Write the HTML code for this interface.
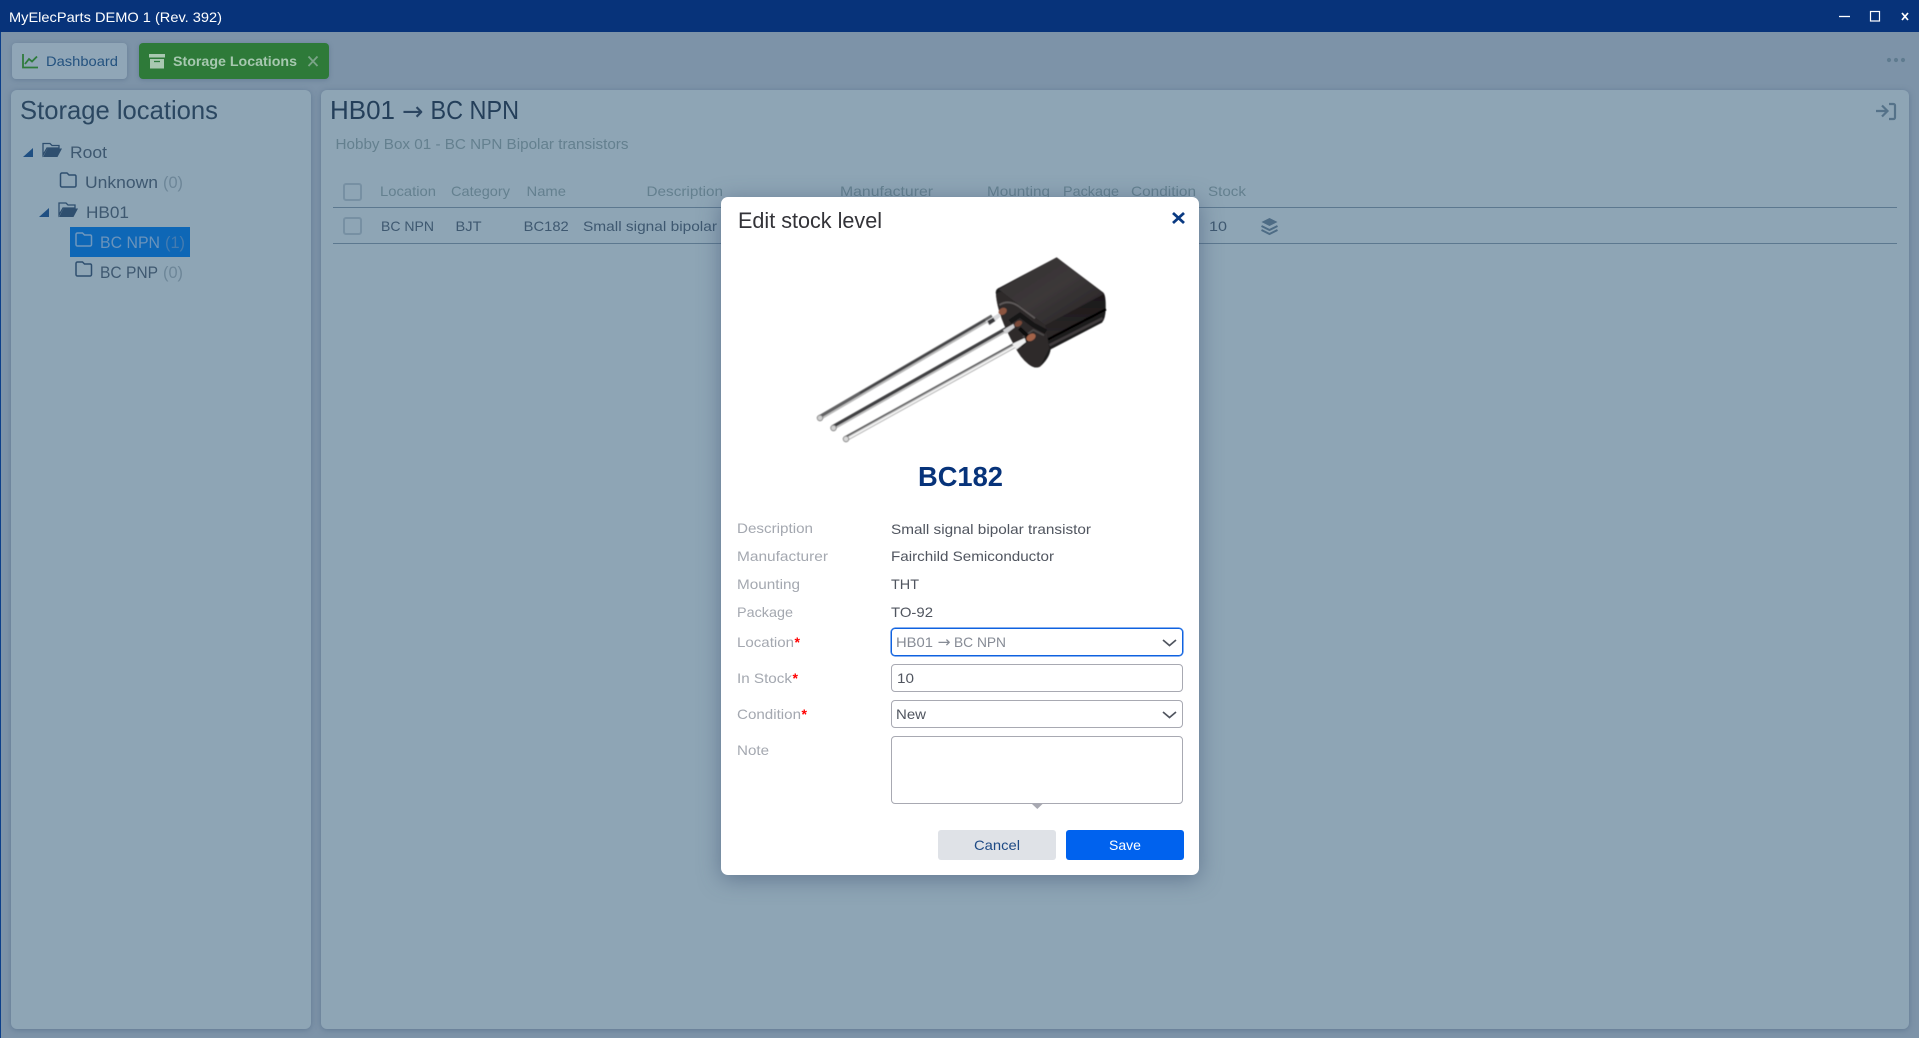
<!DOCTYPE html>
<html lang="en"><head><meta charset="utf-8"><title>MyElecParts DEMO 1 (Rev. 392)</title>
<style>
html,body{margin:0;padding:0;width:1919px;height:1038px;overflow:hidden;background:#7d93a8;font-family:"Liberation Sans",sans-serif}
.b{position:absolute;box-sizing:border-box}
svg{position:absolute;left:0;top:0}
text{font-family:"Liberation Sans",sans-serif}
.arr{font-family:"DejaVu Sans",sans-serif}
</style></head><body>
<div class="b" style="left:0;top:0;width:1px;height:1038px;background:#0c3f8a;z-index:2"></div>
<div class="b" style="left:0;top:0;width:1919px;height:32px;background:#07337a;z-index:2"></div>
<div class="b" style="left:12px;top:43px;width:115px;height:36px;background:#90a6b7;border-radius:4px;box-shadow:0 1px 5px rgba(70,95,125,.4)"></div>
<div class="b" style="left:139px;top:43px;width:190px;height:36px;background:#2e7a39;border-radius:4px;box-shadow:0 1px 5px rgba(70,95,125,.4)"></div>
<div class="b" style="left:11px;top:90px;width:300px;height:939px;background:#8ea5b5;border-radius:6px;box-shadow:0 1px 6px rgba(70,95,125,.5)"></div>
<div class="b" style="left:321px;top:90px;width:1588px;height:939px;background:#8ea5b5;border-radius:6px;box-shadow:0 1px 6px rgba(70,95,125,.5)"></div>
<div class="b" style="left:70px;top:227px;width:120px;height:30px;background:#0e67b6"></div>
<div class="b" style="left:343px;top:183px;width:19px;height:18px;border:2px solid #7790a3;border-radius:3px"></div>
<div class="b" style="left:343px;top:217px;width:19px;height:18px;border:2px solid #7790a3;border-radius:3px"></div>
<div class="b" style="left:333px;top:207px;width:1564px;height:1px;background:#5c788f"></div>
<div class="b" style="left:333px;top:243px;width:1564px;height:1px;background:#5c788f"></div>

<svg width="1919" height="1038" viewBox="0 0 1919 1038" style="z-index:3">
<text x="9" y="22" font-size="14" fill="#fff" textLength="213" lengthAdjust="spacingAndGlyphs">MyElecParts DEMO 1 (Rev. 392)</text>
<path d="M1839 16.500h11" stroke="#fff" stroke-width="1.300"/>
<rect x="1870.500" y="11.500" width="9" height="9.500" fill="none" stroke="#fff" stroke-width="1.200"/>
<path d="M1902 13l6 7M1908 13l-6 7" stroke="#fff" stroke-width="1.700"/>

<path d="M23 54v13.500h15M25 64l4-5 3 2.500 5-5" fill="none" stroke="#2e7b3c" stroke-width="1.800"/>
<text x="46" y="66" font-size="14" fill="#24527f" textLength="72" lengthAdjust="spacingAndGlyphs">Dashboard</text>
<path d="M149 54h16v3.500h-16zM150 59h14v9.500h-14z" fill="#a9c8b1"/><path d="M154 61.500h6" stroke="#2e7b3c" stroke-width="1.300"/>
<text x="173" y="66" font-size="14" font-weight="700" fill="#a7c8b0" textLength="124" lengthAdjust="spacingAndGlyphs">Storage Locations</text>
<path d="M308.500 56.500l9 9.500M317.500 56.500l-9 9.500" stroke="#7aa487" stroke-width="1.800"/>
<circle cx="1889" cy="60" r="2.100" fill="#5f7b8f"/><circle cx="1896" cy="60" r="2.100" fill="#5f7b8f"/><circle cx="1903" cy="60" r="2.100" fill="#5f7b8f"/>

<text x="20" y="119" font-size="26" fill="#2b4761" textLength="198" lengthAdjust="spacingAndGlyphs">Storage locations</text>
<path d="M33 148v9H23z" fill="#1f4f82"/>
<path d="M43 155V143.500h7l2 2h7v2.500h-12z" fill="none" stroke="#2f4f6f" stroke-width="1.300"/><path d="M43 157l4.500-8.500H62L57.500 157z" fill="#2f4f6f"/>
<text x="70" y="158" font-size="17" fill="#3e5870" textLength="37" lengthAdjust="spacingAndGlyphs">Root</text>
<path d="M60.500 174.500a1.500 1.500 0 0 1 1.500-1.500h5l2 2h6a1.500 1.500 0 0 1 1 1.500v9a1.500 1.500 0 0 1-1.500 1.500H62a1.500 1.500 0 0 1-1.500-1.500z" fill="none" stroke="#2f4f6f" stroke-width="1.500"/>
<text x="85" y="188" font-size="17" fill="#3e5870" textLength="73" lengthAdjust="spacingAndGlyphs">Unknown</text>
<text x="163" y="188" font-size="17" fill="#6d8698" textLength="20" lengthAdjust="spacingAndGlyphs">(0)</text>
<path d="M49 208v9H39z" fill="#1f4f82"/>
<path d="M59 215V203h7l2 2h7v3h-12z" fill="none" stroke="#2f4f6f" stroke-width="1.300"/><path d="M59 217l4.500-8.500H78L73.500 217z" fill="#2f4f6f"/>
<text x="86" y="218" font-size="17" fill="#3e5870" textLength="43" lengthAdjust="spacingAndGlyphs">HB01</text>
<path d="M76 234.500a1.500 1.500 0 0 1 1.500-1.500h5l2 2h6a1.500 1.500 0 0 1 1 1.500v8a1.500 1.500 0 0 1-1.500 1.500H77.500a1.500 1.500 0 0 1-1.500-1.500z" fill="none" stroke="#6e97bd" stroke-width="1.500"/>
<text x="100" y="248" font-size="17" fill="#6a93bb" textLength="60" lengthAdjust="spacingAndGlyphs">BC NPN</text>
<text x="165" y="248" font-size="17" fill="#447bb0" textLength="20" lengthAdjust="spacingAndGlyphs">(1)</text>
<path d="M76 263.500a1.500 1.500 0 0 1 1.500-1.500h5l2 2h6a1.500 1.500 0 0 1 1 1.500v9a1.500 1.500 0 0 1-1.500 1.500H77.500a1.500 1.500 0 0 1-1.500-1.500z" fill="none" stroke="#2f4f6f" stroke-width="1.500"/>
<text x="100" y="278" font-size="17" fill="#3e5870" textLength="58" lengthAdjust="spacingAndGlyphs">BC PNP</text>
<text x="163" y="278" font-size="17" fill="#6d8698" textLength="20" lengthAdjust="spacingAndGlyphs">(0)</text>

<text x="330" y="119" font-size="26" fill="#243f5a" textLength="65" lengthAdjust="spacingAndGlyphs">HB01</text>
<text x="402" y="120" class="arr" font-size="26" fill="#2c4661" textLength="21.500" lengthAdjust="spacingAndGlyphs">→</text>
<text x="430.500" y="119" font-size="26" fill="#243f5a" textLength="88.500" lengthAdjust="spacingAndGlyphs">BC NPN</text>
<text x="335.500" y="149" font-size="14.500" fill="#64808f" textLength="293" lengthAdjust="spacingAndGlyphs">Hobby Box 01 - BC NPN Bipolar transistors</text>
<g font-size="14" fill="#64808f">
<text x="380" y="196" textLength="56" lengthAdjust="spacingAndGlyphs">Location</text>
<text x="451" y="196" textLength="59" lengthAdjust="spacingAndGlyphs">Category</text>
<text x="526.500" y="196" textLength="39.500" lengthAdjust="spacingAndGlyphs">Name</text>
<text x="646.500" y="196" textLength="76.500" lengthAdjust="spacingAndGlyphs">Description</text>
<text x="840" y="196" textLength="93" lengthAdjust="spacingAndGlyphs">Manufacturer</text>
<text x="987" y="196" textLength="63" lengthAdjust="spacingAndGlyphs">Mounting</text>
<text x="1063" y="196" textLength="56" lengthAdjust="spacingAndGlyphs">Package</text>
<text x="1131" y="196" textLength="65" lengthAdjust="spacingAndGlyphs">Condition</text>
<text x="1208" y="196" textLength="38" lengthAdjust="spacingAndGlyphs">Stock</text>
</g>
<g font-size="14" fill="#3e5870">
<text x="381" y="231" textLength="53" lengthAdjust="spacingAndGlyphs">BC NPN</text>
<text x="455.500" y="231" textLength="26" lengthAdjust="spacingAndGlyphs">BJT</text>
<text x="523.700" y="231" textLength="45" lengthAdjust="spacingAndGlyphs">BC182</text>
<text x="583" y="231" textLength="134" lengthAdjust="spacingAndGlyphs">Small signal bipolar</text>
<text x="1209" y="231" textLength="18" lengthAdjust="spacingAndGlyphs">10</text>
</g>
<path d="M1269.500 218l8 4-8 4-8-4z" fill="#4e6c85"/><path d="M1261.500 226l8 4 8-4M1261.500 230l8 4 8-4" fill="none" stroke="#4e6c85" stroke-width="2"/>
<path d="M1876 111h11M1882 105.500l5.500 5.500-5.500 5.500M1889 104h4.500a1.500 1.500 0 0 1 1.500 1.500v12a1.500 1.500 0 0 1-1.500 1.500h-4.500" fill="none" stroke="#557289" stroke-width="2.200"/>
</svg>

<div class="b" style="left:721px;top:197px;width:478px;height:678px;background:#fff;border-radius:7px;box-shadow:0 4px 22px rgba(55,75,110,.5);z-index:4"></div>
<div class="b" style="left:891px;top:628px;width:292px;height:28px;border:1px solid #0f62e0;border-radius:4px;box-shadow:0 0 0 .5px #0f62e0;z-index:5"></div>
<div class="b" style="left:891px;top:664px;width:292px;height:28px;border:1px solid #a8a9b2;border-radius:4px;z-index:5"></div>
<div class="b" style="left:891px;top:700px;width:292px;height:28px;border:1px solid #a8a9b2;border-radius:4px;z-index:5"></div>
<div class="b" style="left:891px;top:736px;width:292px;height:68px;border:1px solid #a8a9b2;border-radius:4px;z-index:5"></div>
<div class="b" style="left:938px;top:830px;width:118px;height:30px;background:#dfe2e7;border-radius:3px;z-index:5"></div>
<div class="b" style="left:1066px;top:830px;width:118px;height:30px;background:#0062ee;border-radius:3px;z-index:5"></div>

<svg width="1919" height="1038" viewBox="0 0 1919 1038" style="z-index:6">
<defs>
<filter id="bl2" x="-10%" y="-10%" width="120%" height="120%"><feGaussianBlur stdDeviation=".6"/></filter>
<filter id="bl3" x="-10%" y="-10%" width="120%" height="120%"><feGaussianBlur stdDeviation="1.800"/></filter>
<linearGradient id="tp" x1="0" y1="0" x2="1" y2="1"><stop offset="0" stop-color="#343031"/><stop offset=".5" stop-color="#3c3839"/><stop offset="1" stop-color="#232021"/></linearGradient>
<linearGradient id="sd" x1="0" y1="0" x2="0" y2="1"><stop offset="0" stop-color="#1a1718"/><stop offset="1" stop-color="#2c2829"/></linearGradient>
</defs>
<text x="738" y="228" font-size="22" fill="#333338" textLength="144" lengthAdjust="spacingAndGlyphs">Edit stock level</text>
<path d="M1173 213l11 10M1184 213l-11 10" stroke="#0a3a82" stroke-width="2.800"/>

<g filter="url(#bl2)">
<path d="M820 417.500L992 317" stroke="#bdbdbd" stroke-width="5.200"/>
<path d="M820 416.500L992 316" stroke="#626264" stroke-width="3.200"/>
<path d="M860 393L985 320" stroke="#353537" stroke-width="1.300"/>
<path d="M833 427.500L1007 329" stroke="#bdbdbd" stroke-width="5.200"/>
<path d="M833 426.500L1007 328" stroke="#404042" stroke-width="3.200"/>
<path d="M846 438.500L1017 344" stroke="#a8a8a8" stroke-width="5.400"/>
<path d="M846 439.500L1017 345" stroke="#f2f2f2" stroke-width="2"/>
<path d="M846 436.500L1015 343" stroke="#5a5a5c" stroke-width="1.300"/>
<circle cx="820" cy="418" r="2.800" fill="#cfcfcf" stroke="#777" stroke-width=".8"/>
<circle cx="833.500" cy="428" r="2.800" fill="#cfcfcf" stroke="#777" stroke-width=".8"/>
<circle cx="846" cy="439" r="2.800" fill="#d6d6d6" stroke="#777" stroke-width=".8"/>
</g>

<g transform="translate(960 250) scale(.33333)" filter="url(#bl3)">
<path d="M108 132Q104 118 120 112L290 22 430 128Q438 136 437 175 437 205 426 218L272 298Q268 325 240 350 225 358 205 342 180 322 165 290 112 195 108 132z" fill="#1c1a1b"/>
<path d="M116 118L290 22 432 132 256 226z" fill="url(#tp)"/>
<path d="M256 226L432 132 437 176 262 268z" fill="url(#sd)"/>
<path d="M264 268L438 178" stroke="#060505" stroke-width="7"/>
<path d="M268 286L428 205" stroke="#3f3b3c" stroke-width="8"/>
<path d="M108 135Q118 118 135 132L256 226 268 295 240 350Q225 358 205 342 180 322 165 290 112 195 108 135z" fill="#2e2b2c"/>
<path d="M118 165Q145 148 175 168L225 205" fill="none" stroke="#5f5a5a" stroke-width="5"/>
<path d="M150 215l30-20 40 30 38 20" fill="none" stroke="#141213" stroke-width="14"/>
<path d="M188 262l32-22 32 16" fill="none" stroke="#4c4848" stroke-width="5"/>
<path d="M178 235l28 26-24 26" fill="none" stroke="#0e0d0d" stroke-width="12"/>
<path d="M76 214L116 190 122 200 90 226z" fill="#d8d8da"/>
<path d="M82 213L100 203 106 213 88 225z" fill="#39393b"/>
<path d="M128 240L160 222 164 232 138 252z" fill="#cfcfd1"/>
<path d="M156 282L194 264 198 276 170 298z" fill="#efefef"/>
<ellipse cx="128" cy="184" rx="13" ry="10" fill="#8c5440" transform="rotate(-30 128 184)"/>
<ellipse cx="175" cy="221" rx="12" ry="8" fill="#7a4a38" transform="rotate(-30 175 221)"/>
<ellipse cx="213" cy="262" rx="15" ry="10" fill="#a3634a" transform="rotate(-30 213 262)"/>
</g>

<text x="918" y="486" font-size="28" font-weight="700" fill="#07337a" textLength="85" lengthAdjust="spacingAndGlyphs">BC182</text>

<g font-size="14" fill="#a4a8b0">
<text x="737" y="533" textLength="76" lengthAdjust="spacingAndGlyphs">Description</text>
<text x="737" y="561" textLength="91" lengthAdjust="spacingAndGlyphs">Manufacturer</text>
<text x="737" y="589" textLength="63" lengthAdjust="spacingAndGlyphs">Mounting</text>
<text x="737" y="617" textLength="56" lengthAdjust="spacingAndGlyphs">Package</text>
<text x="737" y="647" textLength="57" lengthAdjust="spacingAndGlyphs">Location</text>
<text x="737" y="683" textLength="55" lengthAdjust="spacingAndGlyphs">In Stock</text>
<text x="737" y="719" textLength="64" lengthAdjust="spacingAndGlyphs">Condition</text>
<text x="737" y="755" textLength="32" lengthAdjust="spacingAndGlyphs">Note</text>
</g>
<g font-size="14" font-weight="700" fill="#f00">
<text x="794.500" y="647">*</text>
<text x="792.500" y="683">*</text>
<text x="801.500" y="719">*</text>
</g>
<g font-size="14" fill="#50555f">
<text x="891" y="534" textLength="200" lengthAdjust="spacingAndGlyphs">Small signal bipolar transistor</text>
<text x="891" y="561" textLength="163" lengthAdjust="spacingAndGlyphs">Fairchild Semiconductor</text>
<text x="891" y="589" textLength="28" lengthAdjust="spacingAndGlyphs">THT</text>
<text x="891" y="617" textLength="42" lengthAdjust="spacingAndGlyphs">TO-92</text>
<text x="897" y="683" textLength="17" lengthAdjust="spacingAndGlyphs">10</text>
<text x="896" y="719" textLength="30" lengthAdjust="spacingAndGlyphs">New</text>
</g>
<text x="896" y="647" font-size="14" fill="#868b95" textLength="37" lengthAdjust="spacingAndGlyphs">HB01</text>
<text x="937.500" y="647" class="arr" font-size="15" fill="#868b95" textLength="13" lengthAdjust="spacingAndGlyphs">→</text>
<text x="954" y="647" font-size="14" fill="#868b95" textLength="52" lengthAdjust="spacingAndGlyphs">BC NPN</text>
<path d="M1163 640l6.500 5.500 6.500-5.500M1163 712l6.500 5.500 6.500-5.500" fill="none" stroke="#50555f" stroke-width="1.700"/>
<path d="M1032 804h10.500l-5.200 5z" fill="#a8a9b2"/>
<text x="974" y="850" font-size="14" fill="#1e4a85" textLength="46" lengthAdjust="spacingAndGlyphs">Cancel</text>
<text x="1109" y="850" font-size="14" fill="#fff" textLength="32" lengthAdjust="spacingAndGlyphs">Save</text>
</svg>
</body></html>
